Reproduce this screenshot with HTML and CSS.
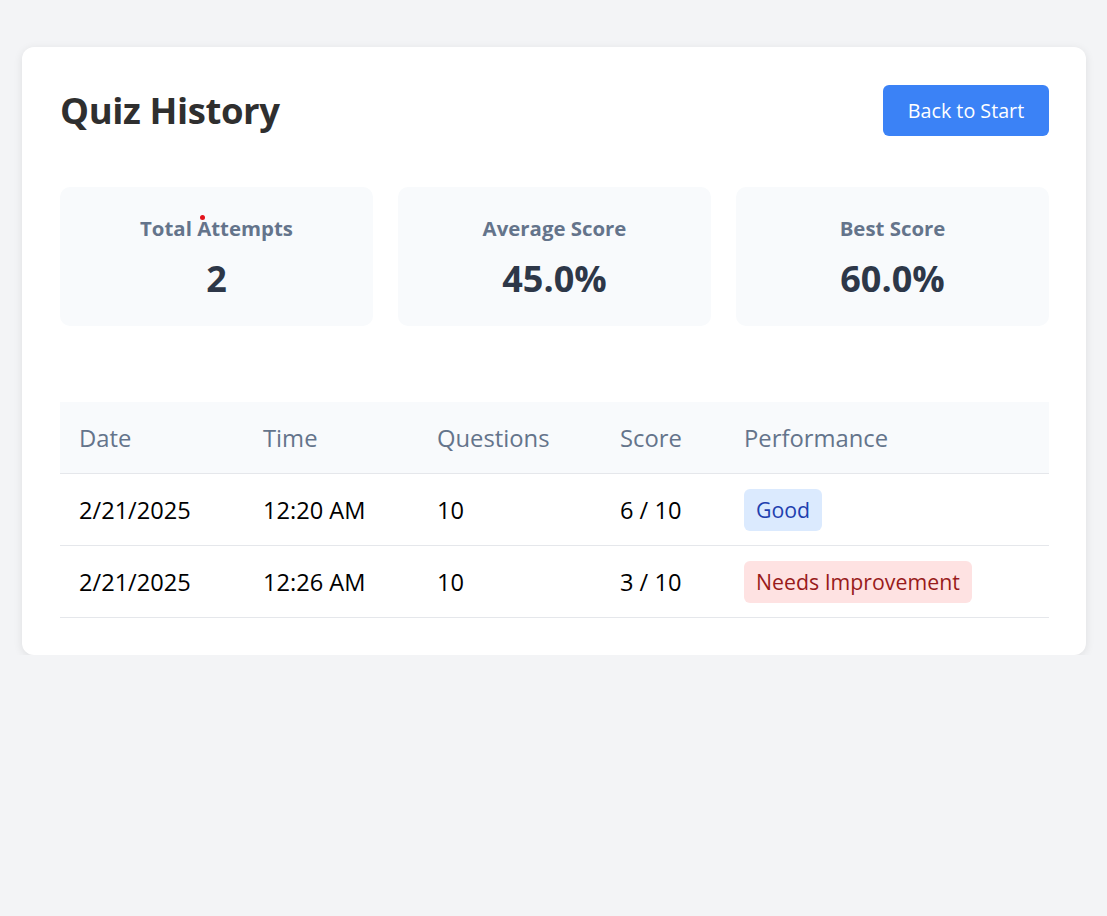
FILE: index.html
```html
<!DOCTYPE html>
<html lang="en">
<head>
<meta charset="utf-8">
<title>Quiz History</title>
<link rel="stylesheet" href="styles.css">
</head>
<body>
<main class="card">
  <header class="card-header">
    <h1 class="title">Quiz History</h1>
    <button class="btn-primary" type="button">Back to Start</button>
  </header>

  <section class="stats">
    <div class="stat">
      <span class="cursor-dot"></span>
      <div class="stat-label">Total Attempts</div>
      <div class="stat-value">2</div>
    </div>
    <div class="stat">
      <div class="stat-label">Average Score</div>
      <div class="stat-value">45.0%</div>
    </div>
    <div class="stat">
      <div class="stat-label">Best Score</div>
      <div class="stat-value">60.0%</div>
    </div>
  </section>

  <table class="history">
    <colgroup>
      <col class="c-date">
      <col class="c-time">
      <col class="c-questions">
      <col class="c-score">
      <col class="c-perf">
    </colgroup>
    <thead>
      <tr>
        <th>Date</th>
        <th>Time</th>
        <th>Questions</th>
        <th>Score</th>
        <th>Performance</th>
      </tr>
    </thead>
    <tbody>
      <tr>
        <td>2/21/2025</td>
        <td>12:20 AM</td>
        <td>10</td>
        <td>6 / 10</td>
        <td><span class="badge badge-good">Good</span></td>
      </tr>
      <tr>
        <td>2/21/2025</td>
        <td>12:26 AM</td>
        <td>10</td>
        <td>3 / 10</td>
        <td><span class="badge badge-bad">Needs Improvement</span></td>
      </tr>
    </tbody>
  </table>
</main>
</body>
</html>
```

FILE: styles.css
```css
* { box-sizing: border-box; }

html, body {
  margin: 0;
  background: #f3f4f6;
}

body {
  padding: 47px 21px 0 22px;
  font-family: "Open Sans", "Noto Sans", sans-serif;
  color: #000;
}

.card {
  background: #fff;
  border-radius: 12px;
  box-shadow: 0 2px 10px rgba(0, 0, 0, 0.09);
  padding: 38px 37px 37px 38px;
}

.card-header {
  display: flex;
  justify-content: space-between;
  align-items: center;
}

.title {
  margin: 0;
  font-size: 36.5px;
  line-height: 51px;
  font-weight: 700;
  color: #2f2f2f;
  letter-spacing: -0.4px;
}

.btn-primary {
  background: #3b82f6;
  color: #fff;
  border: 0;
  border-radius: 6px;
  font-family: inherit;
  font-size: 19.7px;
  height: 51px;
  width: 166px;
  padding: 0;
  cursor: pointer;
}

.stats {
  display: grid;
  grid-template-columns: repeat(3, 1fr);
  gap: 25px;
  margin-top: 51px;
}

.stat {
  position: relative;
  background: #f8fafc;
  border-radius: 10px;
  height: 139px;
  display: flex;
  flex-direction: column;
  align-items: center;
  padding-top: 26px;
}

.stat-label {
  font-size: 20.4px;
  line-height: 30px;
  font-weight: 700;
  color: #64748b;
}

.stat-value {
  margin-top: 11px;
  font-size: 36px;
  line-height: 50px;
  font-weight: 700;
  color: #2d3748;
}

.cursor-dot {
  position: absolute;
  left: 140px;
  top: 28px;
  width: 5px;
  height: 5px;
  border-radius: 50%;
  background: #e3121b;
}

.history {
  width: 100%;
  margin-top: 76px;
  border-collapse: collapse;
  font-size: 23.6px;
}

.c-date { width: 184px; }
.c-time { width: 174px; }
.c-questions { width: 183px; }
.c-score { width: 124px; }

.history th,
.history td {
  text-align: left;
  padding: 0 19px;
  vertical-align: middle;
  border-bottom: 1px solid #e5e7eb;
  line-height: 32px;
}

.history th {
  height: 71px;
  padding-top: 2px;
  background: #f8fafc;
  color: #64748b;
  font-weight: 500;
  font-size: 23.8px;
}

.history td {
  height: 72px;
  padding-top: 1px;
  color: #000;
}

.badge {
  display: inline-block;
  padding: 4px 12px;
  border-radius: 6px;
  font-size: 21.3px;
  line-height: 34px;
  font-weight: 500;
}

.badge-good {
  background: #dbeafe;
  color: #1e40af;
}

.badge-bad {
  background: #fee2e2;
  color: #991b1b;
}
```
